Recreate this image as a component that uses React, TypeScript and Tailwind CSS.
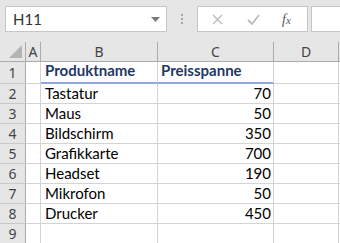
import React from 'react'

const rows: [string, string][] = [
  ['Tastatur', '70'],
  ['Maus', '50'],
  ['Bildschirm', '350'],
  ['Grafikkarte', '700'],
  ['Headset', '190'],
  ['Mikrofon', '50'],
  ['Drucker', '450'],
  ['', ''],
]

const cellFont = { fontFamily: 'Lato, "Noto Sans", sans-serif' }

const Toolbar = () => (
  <div className="flex h-[42px] items-start bg-[#e6e6e6] pt-[6px]">
    <div className="ml-[5px] flex h-[26px] w-[162px] items-center justify-between border border-[#c6c6c6] bg-white pl-[7px] pr-[6px]">
      <span className="text-[15px] text-[#333]" style={cellFont}>H11</span>
      <svg width="9" height="5" viewBox="0 0 9 5"><path d="M0 0h9L4.5 5z" fill="#7a7a7a" /></svg>
    </div>
    <div className="mx-[14px] mt-[8px] flex flex-col gap-[2px]">
      <span className="h-[2px] w-[2px] bg-[#a6a6a6]" />
      <span className="h-[2px] w-[2px] bg-[#a6a6a6]" />
      <span className="h-[2px] w-[2px] bg-[#a6a6a6]" />
    </div>
    <div className="flex h-[26px] w-[111px] items-center border border-[#c6c6c6] bg-white">
      <svg className="ml-[14px]" width="11" height="11" viewBox="0 0 11 11">
        <path d="M1 1l9 9M10 1l-9 9" stroke="#bcbcbc" strokeWidth="1.4" />
      </svg>
      <svg className="ml-[24px]" width="13" height="11" viewBox="0 0 13 11">
        <path d="M1 6l4 4 7-9" stroke="#bcbcbc" strokeWidth="1.8" fill="none" />
      </svg>
      <span className="ml-[22px] text-[14px] italic text-[#5a5a5a]" style={{ fontFamily: '"Liberation Serif", serif' }}>
        f<span className="text-[11px]">x</span>
      </span>
    </div>
    <div className="ml-[3px] h-[26px] flex-1 border border-r-0 border-[#c6c6c6] bg-white" />
  </div>
)

const ColHeader = () => (
  <div className="flex h-[20px] border-b border-[#ababab] bg-[#e6e6e6] text-[14px] text-[#444]" style={{ fontFamily: '"Noto Sans", sans-serif' }}>
    <div className="relative w-[26px] border-r border-[#ababab]">
      <svg className="absolute bottom-[3px] right-[3px]" width="13" height="13" viewBox="0 0 13 13"><path d="M13 0v13H0z" fill="#b4b4b4" /></svg>
    </div>
    <div className="flex w-[15px] items-center justify-center border-r border-[#ababab]">A</div>
    <div className="flex w-[117px] items-center justify-center border-r border-[#ababab]">B</div>
    <div className="flex w-[116px] items-center justify-center border-r border-[#ababab]">C</div>
    <div className="flex w-[65px] items-center justify-center border-r border-[#ababab]">D</div>
    <div className="flex-1" />
  </div>
)

const RowNum = ({ n }: { n: number }) => (
  <div className="flex w-[26px] items-center justify-center border-r border-b border-r-[#ababab] border-b-[#c8c8c8] bg-[#e6e6e6] text-[14px] text-[#444]" style={{ fontFamily: '"Noto Sans", sans-serif' }}>
    {n}
  </div>
)

export default function App() {
  return (
    <div className="h-[243px] w-[340px] overflow-hidden bg-white">
      <Toolbar />
      <ColHeader />
      <div className="flex h-[22px]" style={cellFont}>
        <RowNum n={1} />
        <div className="w-[15px] border-r border-b border-[#d4d4d4]" />
        <div className="flex w-[117px] items-end border-r border-r-[#d4d4d4] border-b-2 border-b-[#8ea9db] pb-[1px] pl-[4px] text-[15px] font-bold text-[#1f3864]">Produktname</div>
        <div className="flex w-[116px] items-end border-r border-r-[#d4d4d4] border-b-2 border-b-[#8ea9db] pb-[1px] pl-[3px] text-[15px] font-bold text-[#1f3864]">Preisspanne</div>
        <div className="w-[65px] border-r border-b border-[#d4d4d4]" />
        <div className="flex-1 border-b border-[#d4d4d4]" />
      </div>
      {rows.map(([name, price], i) => (
        <div key={i} className="flex h-[20px] text-[15px] text-black" style={cellFont}>
          <RowNum n={i + 2} />
          <div className="w-[15px] border-r border-b border-[#d4d4d4]" />
          <div className="flex w-[117px] items-center border-r border-b border-[#d4d4d4] pl-[4px]">{name}</div>
          <div className="flex w-[116px] items-center justify-end border-r border-b border-[#d4d4d4] pr-[2px]">{price}</div>
          <div className="w-[65px] border-r border-b border-[#d4d4d4]" />
          <div className="flex-1 border-b border-[#d4d4d4]" />
        </div>
      ))}
    </div>
  )
}
